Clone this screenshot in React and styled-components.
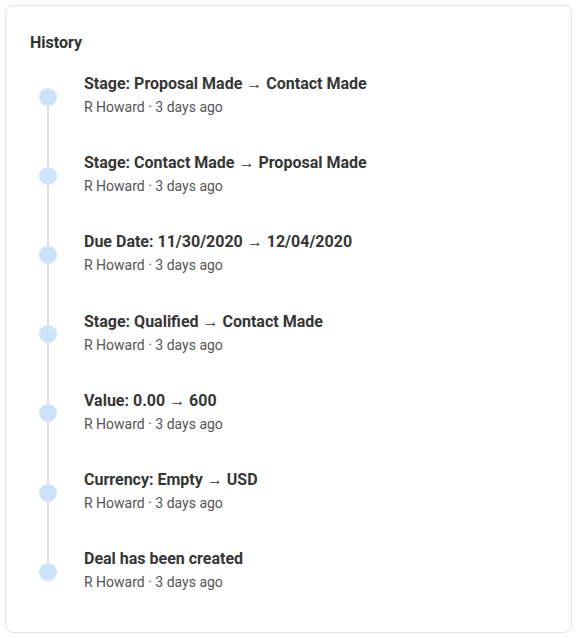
import React from "react";
import styled, { createGlobalStyle } from "styled-components";

const Global = createGlobalStyle`
  html, body { margin: 0; padding: 0; background: #ffffff; }
  body { font-family: Roboto, "Liberation Sans", Arial, sans-serif; }
`;

const Card = styled.section`
  box-sizing: border-box;
  margin: 5px;
  width: 567px;
  height: 628px;
  border: 1px solid #e3e3e3;
  border-radius: 8px;
  background: #fff;
  padding: 27px 24px 0 24px;
`;

const Title = styled.h2`
  margin: 0;
  font-size: 16px;
  font-weight: 700;
  color: #333;
  line-height: 20px;
`;

const List = styled.ol`
  list-style: none;
  margin: 3px 0 0 0;
  padding: 0;
  position: relative;
`;

const Item = styled.li`
  display: flex;
  align-items: center;
  gap: 27px;
  height: 79.2px;
  position: relative;
  padding-left: 9px;
  &::before {
    content: "";
    position: absolute;
    left: 17px;
    width: 2px;
    background: #e1e1e1;
    top: ${(p) => (p.$first ? "50%" : "0")};
    bottom: ${(p) => (p.$last ? "50%" : "0")};
  }
`;

const Dot = styled.span`
  flex: none;
  width: 18px;
  height: 18px;
  border-radius: 50%;
  background: #cce3fb;
  position: relative;
  z-index: 1;
  margin-top: 2px;
`;

const Body = styled.div`
  display: flex;
  flex-direction: column;
  gap: 3px;
`;

const ItemTitle = styled.div`
  font-size: 16px;
  font-weight: 700;
  color: #363636;
  line-height: 20px;
`;

const Meta = styled.div`
  font-size: 14px;
  color: #555;
  line-height: 20px;
`;

const items = [
  "Stage: Proposal Made → Contact Made",
  "Stage: Contact Made → Proposal Made",
  "Due Date: 11/30/2020 → 12/04/2020",
  "Stage: Qualified → Contact Made",
  "Value: 0.00 → 600",
  "Currency: Empty → USD",
  "Deal has been created",
];

export default function App() {
  return (
    <>
      <Global />
      <Card>
        <Title>History</Title>
        <List>
          {items.map((t, i) => (
            <Item key={i} $first={i === 0} $last={i === items.length - 1}>
              <Dot />
              <Body>
                <ItemTitle>{t}</ItemTitle>
                <Meta>R Howard · 3 days ago</Meta>
              </Body>
            </Item>
          ))}
        </List>
      </Card>
    </>
  );
}
